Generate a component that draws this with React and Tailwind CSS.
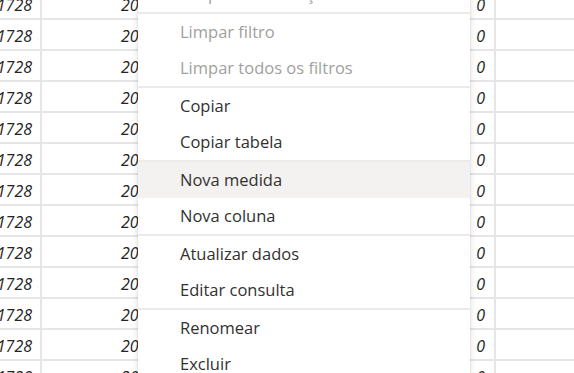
const rows = Array.from({ length: 13 })

const groups = [
  [{ label: 'Limpar classificação', disabled: true }],
  [
    { label: 'Limpar filtro', disabled: true },
    { label: 'Limpar todos os filtros', disabled: true },
  ],
  [{ label: 'Copiar' }, { label: 'Copiar tabela' }],
  [{ label: 'Nova medida', hover: true }, { label: 'Nova coluna' }],
  [{ label: 'Atualizar dados' }, { label: 'Editar consulta' }],
  [{ label: 'Renomear' }, { label: 'Excluir' }],
]

function MenuItem({ label, disabled, hover }) {
  return (
    <div
      className={
        'h-[36px] flex items-center pl-[42px] text-[16.5px] ' +
        (disabled ? 'text-[#a19f9d] ' : 'text-[#323130] ') +
        (hover ? 'bg-[#f3f2f1]' : 'bg-white')
      }
    >
      {label}
    </div>
  )
}

export default function App() {
  return (
    <div
      className="relative w-[574px] h-[373px] overflow-hidden bg-white"
      style={{ fontFamily: '"Open Sans", "Noto Sans", sans-serif' }}
    >
      {/* table behind the menu */}
      <div className="-mt-[11px] -ml-[60px] flex flex-col">
        {rows.map((_, i) => (
          <div key={i} className="flex h-[31px] border-b-2 border-[#e6e6e6] text-[16px] italic text-[#252423]">
            <div className="w-[102px] shrink-0 flex items-center justify-end pt-[2px] pr-[8px] border-r-2 border-[#e6e6e6]">
              21728
            </div>
            <div className="w-[256px] shrink-0 flex items-center pt-[2px] pl-[79px]">2021</div>
            <div className="w-[198px] shrink-0 flex items-center justify-end pt-[2px] pr-[9px] border-r-2 border-[#e6e6e6]">
              0
            </div>
            <div className="flex-1" />
          </div>
        ))}
      </div>

      {/* context menu */}
      <div className="absolute left-[138px] top-[-24px] w-[332px] bg-white shadow-[0_3px_7px_rgba(0,0,0,0.13),0_1px_2px_rgba(0,0,0,0.11)]">
        {groups.map((g, gi) => (
          <div key={gi}>
            {gi > 0 && <div className="h-[2px] bg-[#edebe9]" />}
            {g.map((it) => (
              <MenuItem key={it.label} {...it} />
            ))}
          </div>
        ))}
      </div>
    </div>
  )
}
